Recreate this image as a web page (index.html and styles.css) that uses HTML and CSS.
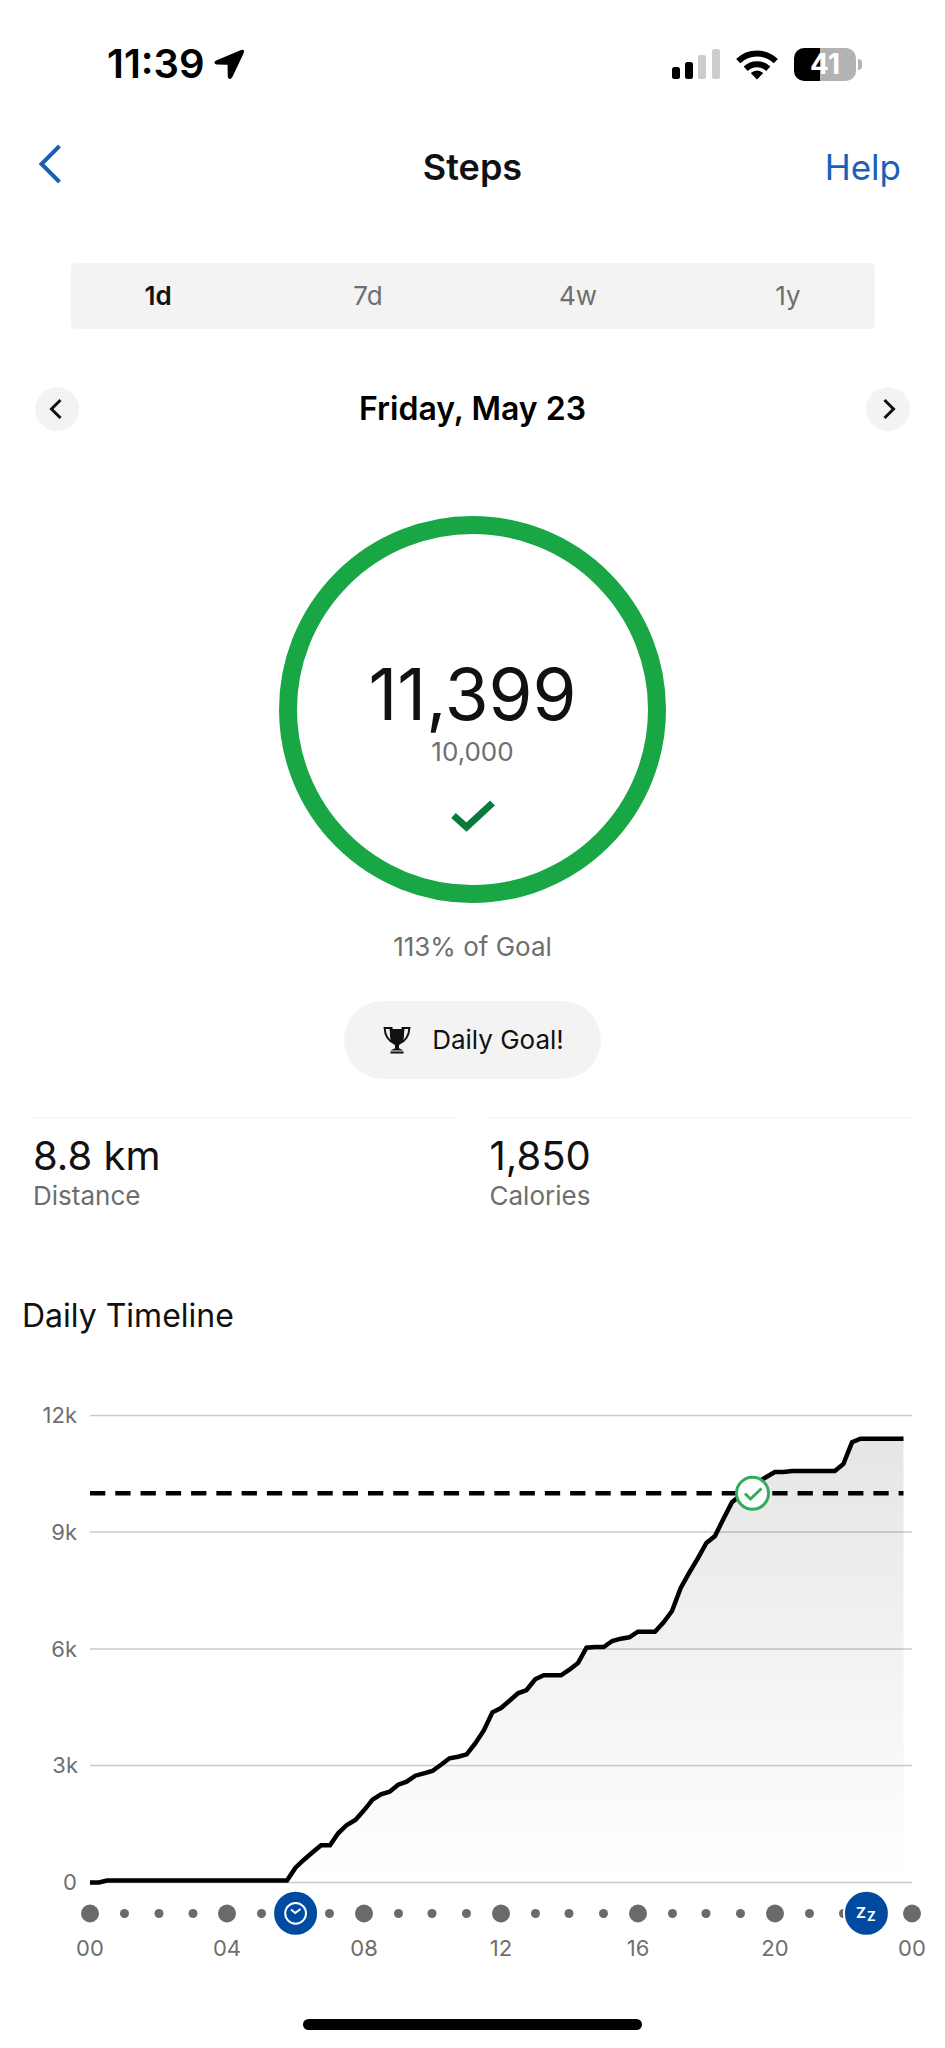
FILE: index.html
```html
<!DOCTYPE html>
<html lang="en">
<head>
<meta charset="utf-8">
<meta name="viewport" content="width=device-width, initial-scale=1">
<title>Steps</title>
<link rel="stylesheet" href="styles.css">
</head>
<body>
<div class="screen">
  <div class="status">
    <div class="status-left">
      <span class="clock">11:39</span>
      <svg class="location" viewBox="0 0 32 32" aria-hidden="true"><path d="M28 1 2.200 11.800Q.3 12.700.4 14 .6 15.900 3 16L13.300 16.200Q14 16.200 14 16.900L14.200 28.500Q14.300 30.800 16.200 31 18 31 19 29L30.700 4Q31.500 2 30.500 1.100 29.500.3 28 1Z"/></svg>
    </div>
    <div class="status-right">
      <svg class="signal" viewBox="0 0 48 30" aria-hidden="true">
        <rect x="0" y="18" width="8" height="12" rx="2.500"/><rect x="13" y="13" width="8" height="17" rx="2.500"/>
        <rect class="dim" x="26" y="6" width="8" height="24" rx="2.500"/><rect class="dim" x="40" y="0" width="8" height="30" rx="2.500"/>
      </svg>
      <svg class="wifi" viewBox="0 0 42 31" aria-hidden="true">
        <path class="arc" d="M2.200 12.200A27 27 0 0 1 39.800 12.200"/>
        <path class="arc" d="M9.700 19.700A16.500 16.500 0 0 1 32.300 19.700"/>
        <path d="M21 30.500 14.700 24Q21 18.800 27.300 24Z"/>
      </svg>
      <span class="battery"><span class="battery-body">41</span><span class="battery-cap"></span></span>
    </div>
  </div>

  <header class="nav">
    <button class="back" type="button" aria-label="Back"><svg viewBox="0 0 24 40" aria-hidden="true"><path d="M21.500 2 3.500 20 21.500 38"/></svg></button>
    <h1 class="title">Steps</h1>
    <a class="help" href="#">Help</a>
  </header>

  <div class="ranges">
    <button type="button" class="range active" aria-pressed="true">1d</button>
    <button type="button" class="range" aria-pressed="false">7d</button>
    <button type="button" class="range" aria-pressed="false">4w</button>
    <button type="button" class="range" aria-pressed="false">1y</button>
  </div>

  <div class="dates">
    <button class="round" type="button" aria-label="Previous day"><svg viewBox="0 0 44 44" aria-hidden="true"><path d="M25.500 13 16.500 22 25.500 31"/></svg></button>
    <h2 class="date">Friday, May 23</h2>
    <button class="round" type="button" aria-label="Next day"><svg viewBox="0 0 44 44" aria-hidden="true"><path d="M18.500 13 27.500 22 18.500 31"/></svg></button>
  </div>

  <section class="goal">
    <div class="ring">
      <div class="count">11,399</div>
      <div class="target">10,000</div>
      <svg class="check" viewBox="0 0 44 32" aria-hidden="true"><path d="M2.500 15.500 15.500 27 41.500 3"/></svg>
    </div>
    <p class="percent">113% of Goal</p>
    <button class="badge" type="button">
      <svg viewBox="0 0 28 28" aria-hidden="true">
        <path class="handles" d="M9 2H1.600C2 8 4.500 14.500 11 17M19 2H26.400C26 8 23.500 14.500 17 17"/>
        <path d="M6.500 1H9.500V3H18.500V1H21.500V3Q21 6 21 9.500C21 14.500 19 17 16 19.200V22.300L20.500 24.500H7.500L12 22.300V19.200C9 17 7 14.500 7 9.500Q7 6 6.500 3ZM7.500 25.500H20.500V27.500H7.500Z"/>
      </svg>
      <span>Daily Goal!</span>
    </button>
  </section>

  <section class="stats">
    <div class="stat"><div class="value">8.8 km</div><div class="label">Distance</div></div>
    <div class="stat"><div class="value">1,850</div><div class="label">Calories</div></div>
  </section>

  <section class="timeline">
    <h2 class="heading">Daily Timeline</h2>
    <svg class="chart" viewBox="0 0 945 580" role="img" aria-label="Steps over the day">
      <defs><linearGradient id="fade" x1="0" y1="0" x2="0" y2="1"><stop offset="0" stop-color="#000" stop-opacity=".1"/><stop offset="1" stop-color="#000" stop-opacity="0"/></linearGradient></defs>
      <path class="grid" d="M90 15.500H912M90 132H912M90 249H912M90 365.500H912M90 482.500H912"/>
      <path fill="url(#fade)" d="M287 482.500V480.500L295.500 467.700 304 459.700 312.600 452.300 321.100 445.300H330L338.200 433.300 346.800 425 355.400 420 364 410.300 372.500 399.700 381 394.300 389.600 391.700 398.200 384.700 406.700 381.700 415.300 375.700 423.900 373.300 432.400 371 441 364.700 449.500 358.300 458 356.700 466.700 354.300 475.200 343.500 483.800 330.500 492.400 312.300 501 308 509.500 300.700 518 293.300 526.600 290 535.200 279.300 543.700 275.300H561L569.400 269.700 578 263 586.500 247.700 595 247H603.700L612.200 241 620.800 238.700 629.300 237.300 637.900 231.700H655L663.600 222.300 672 211 680.700 188 689.300 172.700 697.800 158.300 706.400 143 715 136 723.500 118.700 732 102.300 740.600 95 749.200 88 757.800 82 766.300 77 774.900 72H783.500L792 71H834.800L843.400 64 852 42.300 860.500 38.700H903.500V482.500Z"/>
      <path class="line" d="M90 482.500H99L107 480.500H287L295.500 467.700 304 459.700 312.600 452.300 321.100 445.300H330L338.200 433.300 346.800 425 355.400 420 364 410.300 372.500 399.700 381 394.300 389.600 391.700 398.200 384.700 406.700 381.700 415.300 375.700 423.900 373.300 432.400 371 441 364.700 449.500 358.300 458 356.700 466.700 354.300 475.200 343.500 483.800 330.500 492.400 312.300 501 308 509.500 300.700 518 293.300 526.600 290 535.200 279.300 543.700 275.300H561L569.400 269.700 578 263 586.500 247.700 595 247H603.700L612.200 241 620.800 238.700 629.300 237.300 637.900 231.700H655L663.600 222.300 672 211 680.700 188 689.300 172.700 697.800 158.300 706.400 143 715 136 723.500 118.700 732 102.300 740.600 95 749.200 88 757.800 82 766.300 77 774.900 72H783.500L792 71H834.800L843.400 64 852 42.300 860.500 38.700H903.500"/>
      <path class="target-line" d="M90 93.200H903.500"/>
      <g class="met"><circle cx="752.500" cy="93.300" r="16"/><path d="M745 93.500 750.500 99 761.500 88.500"/></g>
      <g class="y-labels"><text x="77" y="23">12k</text><text x="77" y="140">9k</text><text x="77" y="257">6k</text><text x="78" y="373">3k</text><text x="77" y="490">0</text></g>
      <g class="dots">
        <circle cx="90" cy="513.500" r="9"/><circle cx="227" cy="513.500" r="9"/><circle cx="364" cy="513.500" r="9"/><circle cx="501" cy="513.500" r="9"/><circle cx="638" cy="513.500" r="9"/><circle cx="775" cy="513.500" r="9"/><circle cx="912" cy="513.500" r="9"/>
        <circle cx="124.500" cy="513.500" r="4.500"/><circle cx="159" cy="513.500" r="4.500"/><circle cx="193" cy="513.500" r="4.500"/>
        <circle cx="261.500" cy="513.500" r="4.500"/><circle cx="329.500" cy="513.500" r="4.500"/>
        <circle cx="398.500" cy="513.500" r="4.500"/><circle cx="432" cy="513.500" r="4.500"/><circle cx="466.500" cy="513.500" r="4.500"/>
        <circle cx="535.500" cy="513.500" r="4.500"/><circle cx="569" cy="513.500" r="4.500"/><circle cx="603.500" cy="513.500" r="4.500"/>
        <circle cx="672.500" cy="513.500" r="4.500"/><circle cx="706" cy="513.500" r="4.500"/><circle cx="740.500" cy="513.500" r="4.500"/>
        <circle cx="809.500" cy="513.500" r="4.500"/><circle cx="843.500" cy="513.500" r="4.500"/>
      </g>
      <g class="marker"><circle cx="295.600" cy="513.300" r="22.500"/><path d="M306 513.300A10.400 10.400 0 1 1 285.200 513.300A10.400 10.400 0 1 1 306 513.300M291 509.500 295.200 513 300.500 509"/></g>
      <g class="marker"><circle cx="866.400" cy="513.300" r="22.500"/><text class="z-big" x="856" y="518">Z</text><text class="z-small" x="867" y="521">Z</text></g>
      <g class="x-labels"><text x="90" y="556">00</text><text x="227" y="556">04</text><text x="364" y="556">08</text><text x="501" y="556">12</text><text x="638" y="556">16</text><text x="775" y="556">20</text><text x="912" y="556">00</text></g>
    </svg>
  </section>
  <div class="home"></div>
</div>
</body>
</html>
```
FILE: styles.css
```css
* { box-sizing: border-box; }
body { margin: 0; background: #fff; color: #111; font-family: Inter, "Liberation Sans", sans-serif; }
h1, h2, p { margin: 0; }
button { border: 0; padding: 0; background: none; color: inherit; font: inherit; cursor: pointer; }
svg { display: block; flex: none; }
.screen { min-height: 100vh; display: flex; flex-direction: column; }

.status { display: flex; justify-content: space-between; align-items: center; height: 128px; padding: 0 83px 0 107px; color: #000; }
.status-left, .status-right { display: flex; align-items: center; }
.status-left { gap: 9px; }
.clock { font-size: 40px; line-height: 48px; font-weight: 600; }
.location { width: 31px; height: 31px; }
.status-right { gap: 16px; }
.signal { width: 48px; height: 30px; }
.dim { fill: #ccc; }
.wifi { width: 42px; height: 31px; }
.arc { fill: none; stroke: #000; stroke-width: 6; }
.battery { display: flex; align-items: center; gap: 2px; }
.battery-body { width: 62px; height: 33px; border-radius: 10px; background: linear-gradient(90deg, #000 42%, #b3b3b3 42%); color: #fff; font-size: 28px; line-height: 33px; font-weight: 700; text-align: center; }
.battery-cap { width: 4px; height: 11px; border-radius: 0 5px 5px 0; background: #b3b3b3; }

.nav { display: grid; grid-template-columns: 1fr auto 1fr; align-items: center; height: 78px; padding: 0 44px; }
.back { justify-self: start; align-self: start; margin: 16px 0 0 -6px; }
.back svg { width: 24px; height: 40px; fill: none; stroke: #1a5fb8; stroke-width: 4; }
.title { font-size: 36px; line-height: 44px; font-weight: 600; }
.help { justify-self: end; font-size: 35px; line-height: 44px; color: #1a5fb8; text-decoration: none; }

.ranges { display: flex; justify-content: space-between; height: 66px; margin: 57px 70px 0 71px; padding: 0 54px; border-radius: 5px; background: #f3f3f3; }
.range { width: 66px; font-size: 26px; line-height: 32px; color: #6e6e6e; }
.active { color: #111; font-weight: 600; }

.dates { display: flex; justify-content: space-between; align-items: center; height: 44px; margin: 58px 35px 0; }
.round { width: 44px; height: 44px; border-radius: 50%; background: #f3f3f3; }
.round svg { width: 44px; height: 44px; fill: none; stroke: #111; stroke-width: 3; }
.date { font-size: 32px; line-height: 44px; font-weight: 600; color: #000; }

.goal { display: flex; flex-direction: column; align-items: center; margin-top: 85px; }
.ring { display: flex; flex-direction: column; align-items: center; width: 387px; height: 387px; padding-top: 118px; border: 18px solid #19a644; border-radius: 50%; }
.count { font-size: 71px; line-height: 84px; }
.target { font-size: 26px; line-height: 32px; color: #6e6e6e; }
.check { width: 44px; height: 32px; margin-top: 32px; fill: none; stroke: #087a3c; stroke-width: 7; }
.percent { margin-top: 28px; font-size: 26px; line-height: 32px; color: #6e6e6e; }
.badge { display: flex; align-items: center; gap: 21px; height: 78px; margin-top: 38px; padding: 0 37px 0 39px; border-radius: 40px; background: #f3f3f3; font-size: 26px; line-height: 32px; }
.badge svg { width: 28px; height: 28px; fill: #111; }
.badge .handles { fill: none; stroke: #111; stroke-width: 2; }

.stats { display: grid; grid-template-columns: 1fr 1fr; gap: 34px; margin: 38px 33px 0; }
.stat { padding-top: 13px; border-top: 2px solid #f7f7f7; }
.value { font-size: 40px; line-height: 48px; }
.label { font-size: 26px; line-height: 32px; color: #6e6e6e; }

.timeline { margin-top: 84px; }
.heading { padding-left: 22px; font-size: 32px; line-height: 40px; font-weight: 400; }
.chart { width: 100%; height: auto; margin-top: 64px; font-size: 22px; }
.grid { stroke: #ccc; stroke-width: 1.500; }
.line { fill: none; stroke: #000; stroke-width: 4.500; }
.target-line { stroke: #000; stroke-width: 4.500; stroke-dasharray: 15.300 9.970; }
.met { fill: #fff; stroke: #2fae57; stroke-width: 3; }
.met path { fill: none; }
.y-labels, .x-labels { fill: #6e6e6e; }
.y-labels { text-anchor: end; }
.x-labels { text-anchor: middle; }
.dots { fill: #6a6a6a; }
.marker circle { fill: #004a9f; stroke: #fff; stroke-width: 2; }
.marker path { fill: none; stroke: #fff; stroke-width: 2; }
.marker text { fill: #fff; font-weight: 700; }
.z-big { font-size: 15px; }
.z-small { font-size: 13px; }
.home { width: 339px; height: 11px; margin: auto auto 18px; border-radius: 6px; background: #000; }
```
